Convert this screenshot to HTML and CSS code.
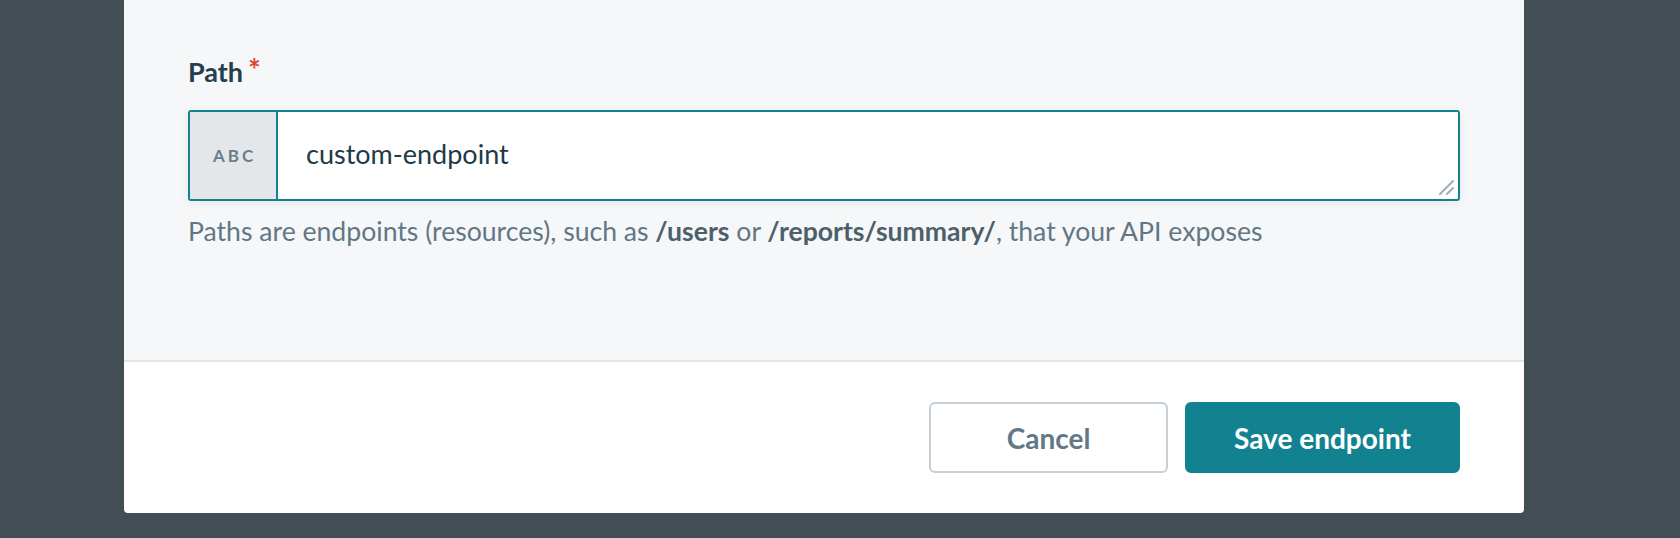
FILE: index.html
```html
<!DOCTYPE html>
<html lang="en">
<head>
<meta charset="utf-8">
<title>Path</title>
<link rel="stylesheet" href="styles.css">
</head>
<body>
<div class="backdrop">
  <div class="modal">
    <div class="modal-body">
      <div class="field-label">Path<span class="req">*</span></div>
      <div class="input-group">
        <div class="input-prefix">ABC</div>
        <div class="input-value">
          custom-endpoint
          <svg class="resize-handle" width="16" height="16" viewBox="0 0 16 16">
            <path d="M2 15 L15 2 M9 15 L15 9" stroke="#a3adb4" stroke-width="2" fill="none" stroke-linecap="round"/>
          </svg>
        </div>
      </div>
      <div class="field-hint">Paths are endpoints (resources), such as <b>/users</b> or <b>/reports/summary/</b>, that your API exposes</div>
    </div>
    <div class="modal-footer">
      <button class="btn btn-secondary">Cancel</button>
      <button class="btn btn-primary">Save endpoint</button>
    </div>
  </div>
</div>
</body>
</html>
```
FILE: styles.css
```css
html, body {
  margin: 0;
  padding: 0;
}
body {
  background: #434d54;
  font-family: "Lato", "Noto Sans", sans-serif;
}
.backdrop {
  height: 538px;
  overflow: hidden;
  padding-left: 124px;
}
.modal {
  width: 1400px;
  background: #ffffff;
  border-radius: 0 0 4px 4px;
  overflow: hidden;
}
.modal-body {
  background: #f6f7f9;
  padding: 54px 64px 111px;
}
.field-label {
  font-size: 27px;
  line-height: 36px;
  font-weight: 700;
  color: #22404d;
  margin-bottom: 20px;
}
.req {
  color: #e0452b;
  font-size: 30px;
  line-height: 30px;
  vertical-align: top;
  font-weight: 700;
  margin-left: 5px;
}
.input-group {
  display: flex;
  height: 91px;
  box-sizing: border-box;
  border: 2px solid #14818f;
  border-radius: 3px;
  background: #ffffff;
  box-shadow: 0 2px 8px rgba(30, 50, 60, 0.08);
  overflow: hidden;
}
.input-prefix {
  width: 88px;
  flex: none;
  background: #e3e7ea;
  border-right: 2px solid #14818f;
  display: flex;
  align-items: center;
  justify-content: center;
  font-size: 17px;
  font-weight: 700;
  letter-spacing: 3px;
  padding-left: 3px;
  box-sizing: border-box;
  color: #6b7d88;
}
.input-value {
  flex: 1;
  position: relative;
  display: flex;
  align-items: center;
  padding-left: 28px;
  padding-bottom: 4px;
  font-size: 27px;
  color: #1e3a46;
}
.resize-handle {
  position: absolute;
  right: 4px;
  bottom: 4px;
}
.field-hint {
  margin-top: 12px;
  font-size: 26.6px;
  line-height: 36px;
  color: #627785;
}
.field-hint b {
  color: #4c5f6b;
  font-weight: 700;
}
.modal-footer {
  border-top: 2px solid #e3e6ea;
  display: flex;
  justify-content: flex-end;
  gap: 17px;
  padding: 40px 64px 40px;
}
.btn {
  height: 71px;
  box-sizing: border-box;
  border-radius: 6px;
  font-family: inherit;
  font-size: 28px;
  font-weight: 700;
  cursor: pointer;
}
.btn-secondary {
  width: 239px;
  background: #ffffff;
  border: 2px solid #c5cfd5;
  color: #637886;
}
.btn-primary {
  width: 275px;
  background: #138290;
  border: 2px solid #138290;
  color: #ffffff;
}
```
